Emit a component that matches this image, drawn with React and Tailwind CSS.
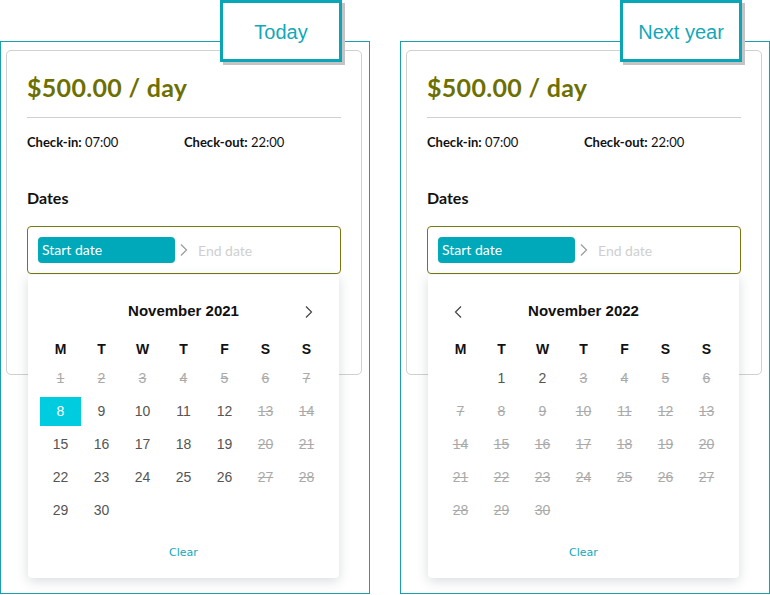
import React from 'react';

const WEEKDAYS = ['M', 'T', 'W', 'T', 'F', 'S', 'S'];

function Chevron({ dir = 'right', className = '' }) {
    return (
        <svg width="10" height="14" viewBox="0 0 10 14" className={className}>
            <path
                d={dir === 'right' ? 'M2 1.5 L7.5 7 L2 12.5' : 'M8 1.5 L2.5 7 L8 12.5'}
                fill="none"
                stroke="currentColor"
                strokeWidth="1.2"
            />
        </svg>
    );
}

function Calendar({ title, offset, days, prev, next }) {
    const cells = [];
    for (let i = 0; i < offset; i++) cells.push(null);
    days.forEach((d) => cells.push(d));

    return (
        <div className="absolute left-[1px] top-[49px] w-[311px] bg-white rounded-b-[4px] shadow-[0_3px_12px_rgba(40,60,70,0.18)] px-[12px] pt-[25px] pb-[17px] font-['Liberation_Sans',Arial,sans-serif]">
            {/* Month header */}
            <div className="relative h-[22px] flex items-center justify-center">
                {prev && <Chevron dir="left" className="absolute left-[13px] top-[5px] text-[#444]" />}
                <span className="text-[15px] font-bold text-[#111]">{title}</span>
                {next && <Chevron dir="right" className="absolute right-[13px] top-[5px] text-[#444]" />}
            </div>

            {/* Weekdays */}
            <div className="grid grid-cols-[repeat(7,41px)] mt-[15px] h-[25px] items-center">
                {WEEKDAYS.map((w, i) => (
                    <div key={i} className="text-center text-[14px] font-bold text-[#111]">
                        {w}
                    </div>
                ))}
            </div>

            {/* Days */}
            <div className="grid grid-cols-[repeat(7,41px)] gap-y-[4px] mt-[2px]">
                {cells.map((c, i) =>
                    c === null ? (
                        <div key={i} className="h-[29px]" />
                    ) : (
                        <div
                            key={i}
                            className={
                                'h-[29px] flex items-center justify-center text-[14px] ' +
                                (c.selected
                                    ? 'bg-[#00cce0] text-white'
                                    : c.disabled
                                    ? 'text-[#aaa] line-through'
                                    : 'text-[#555]')
                            }
                        >
                            {c.n}
                        </div>
                    )
                )}
            </div>

            <div className="mt-[20px] text-center text-[11px] leading-[16px] text-[#12a8ba] font-['DejaVu_Sans',Verdana,sans-serif]">
                Clear
            </div>
        </div>
    );
}

function Panel({ label, calendar }) {
    return (
        <div className="relative w-[370px] h-[553px] border border-[#1a9fb1] bg-white">
            <div className="ml-[5px] mt-[8px] w-[356px] h-[325px] border border-[#d0d0d0] rounded-[5px] px-[20px] pt-[20px] font-['Lato','Open_Sans',sans-serif]">
                <div className="h-[32px] leading-[32px] text-[25px] font-bold text-[#6d7000] tracking-[0.3px]">
                    $500.00 / day
                </div>
                <div className="mt-[14px] border-t border-[#cfcfcf]" />
                <div className="grid grid-cols-2 mt-[14px] h-[20px] leading-[20px] text-[13px] text-[#111]">
                    <div>
                        <span className="font-bold">Check-in:</span> 07:00
                    </div>
                    <div>
                        <span className="font-bold">Check-out:</span> 22:00
                    </div>
                </div>
                <div className="mt-[34px] h-[24px] leading-[24px] text-[16px] font-bold text-[#111]">Dates</div>
                <div className="relative mt-[16px]">
                    <div className="h-[48px] border border-[#77780f] rounded-[4px] flex items-center pl-[10px]">
                        <div className="w-[137px] h-[26px] rounded-[4px] bg-[#00a9ba] text-white text-[14px] leading-[26px] pl-[4px]">
                            Start date
                        </div>
                        <Chevron dir="right" className="ml-[4px] text-[#999]" />
                        <span className="ml-[9px] text-[14px] text-[#cfcfcf]">End date</span>
                    </div>
                    {calendar}
                </div>
            </div>

            {/* Tab label */}
            <div className="absolute top-[-42px] right-[27px] w-[122px] h-[62px] pt-[2px] border-[3px] border-[#0aa6b7] bg-white shadow-[3px_3px_0_#c4c4c4] flex items-center justify-center text-[20px] text-[#12a8ba] font-['Liberation_Sans',Arial,sans-serif]">
                {label}
            </div>
        </div>
    );
}

export default function App() {
    const nov2021 = [];
    for (let n = 1; n <= 30; n++) {
        const dow = (n - 1) % 7; // Monday = 0
        nov2021.push({
            n,
            selected: n === 8,
            disabled: n <= 7 || dow >= 5,
        });
    }

    const nov2022 = [];
    for (let n = 1; n <= 30; n++) {
        nov2022.push({ n, disabled: n > 2 });
    }

    return (
        <div className="w-[770px] h-[595px] bg-white flex gap-[30px] pt-[41px]">
            <Panel
                label="Today"
                calendar={<Calendar title="November 2021" offset={0} days={nov2021} next />}
            />
            <Panel
                label="Next year"
                calendar={<Calendar title="November 2022" offset={1} days={nov2022} prev />}
            />
        </div>
    );
}
